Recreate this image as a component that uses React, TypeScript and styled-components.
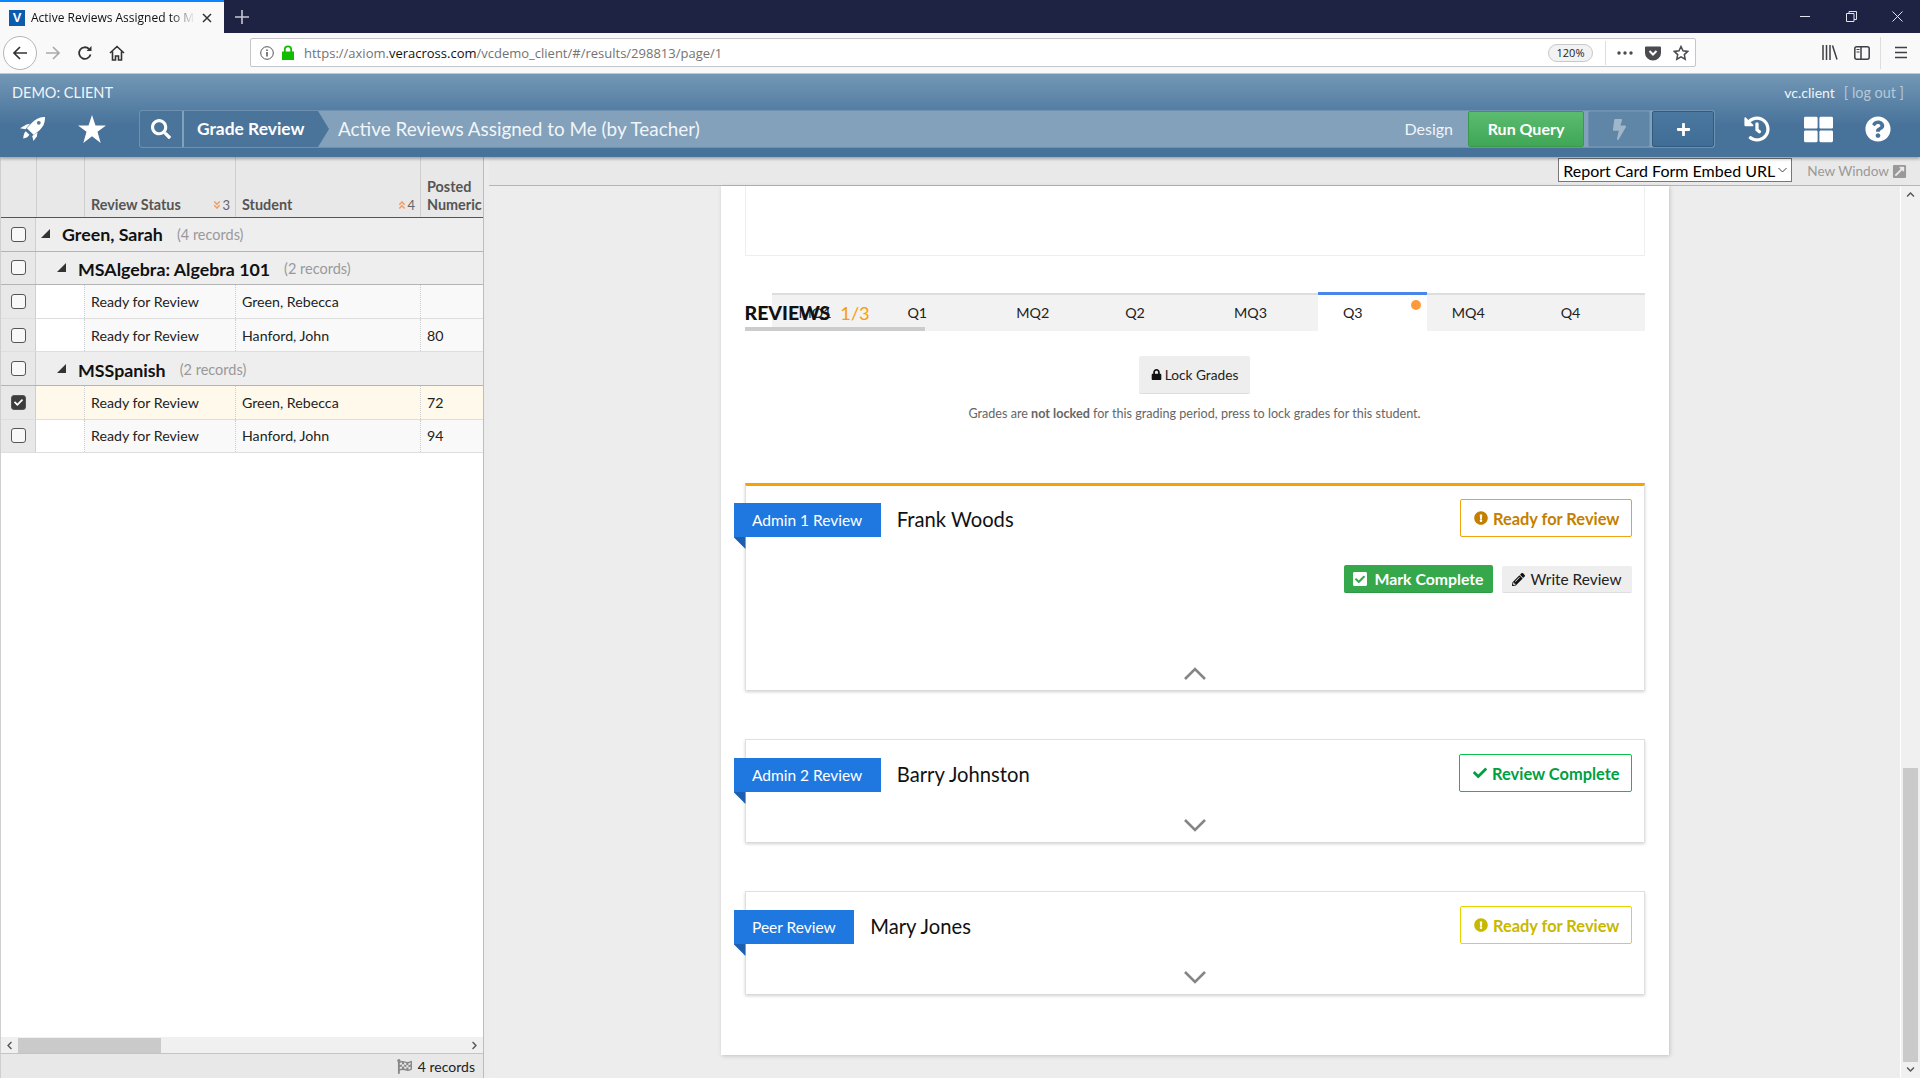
import React from 'react';
import styled, { createGlobalStyle } from 'styled-components';
import {
  FaSearch,
  FaBolt,
  FaPlus,
  FaHistory,
  FaThLarge,
  FaQuestionCircle,
  FaLock,
  FaCheckSquare,
  FaPencilAlt,
  FaExclamationCircle,
  FaCheck,
  FaFlagCheckered,
  FaExternalLinkSquareAlt,
  FaAngleDoubleDown,
  FaAngleDoubleUp,
  FaChevronLeft,
  FaChevronRight,
  FaChevronUp,
  FaChevronDown,
} from 'react-icons/fa';

const Global = createGlobalStyle`
  html, body {
    margin: 0;
    padding: 0;
    height: 1078px;
    overflow: hidden;
    background: #eee;
    font-family: Lato, "Liberation Sans", sans-serif;
  }
  * { box-sizing: border-box; }
`;

const Page = styled.div`
  width: 1920px;
  height: 1078px;
  display: flex;
  flex-direction: column;
  overflow: hidden;
`;

// browser chrome
const TabStrip = styled.div`
  height: 33px;
  background: #1e2344;
  display: flex;
  align-items: stretch;
`;

const Tab = styled.div`
  width: 224px;
  background: #f9f9fa;
  border-top: 2px solid #0a84ff;
  display: flex;
  align-items: center;
  padding-left: 9px;
`;

const Favicon = styled.div`
  width: 16px;
  height: 16px;
  background: #0b5cad;
  color: #fff;
  font: bold 13px/16px "Liberation Sans", sans-serif;
  text-align: center;
`;

const TabTitle = styled.div`
  width: 164px;
  margin-left: 6px;
  font: 12px "Open Sans", sans-serif;
  color: #111;
  white-space: nowrap;
  overflow: hidden;
  mask-image: linear-gradient(to right, #000 85%, transparent);
`;

const TabClose = styled.div`
  margin-left: 6px;
  display: flex;
  color: #333;
`;

const NewTab = styled.div`
  width: 35px;
  display: flex;
  align-items: center;
  justify-content: center;
  color: #c8c9d2;
`;

const WindowButtons = styled.div`
  margin-left: auto;
  display: flex;
  align-items: center;
  color: #e4e5ec;
`;

const WindowButton = styled.div`
  width: 46px;
  height: 33px;
  display: flex;
  align-items: center;
  justify-content: center;
`;

const Toolbar = styled.div`
  height: 41px;
  background: #f9f9fa;
  border-bottom: 1px solid #ccc;
  display: flex;
  align-items: center;
  padding: 0 3px 1px 3px;
`;

const BackButton = styled.div`
  width: 34px;
  height: 34px;
  border: 1px solid #b5b5b8;
  border-radius: 50%;
  background: #fff;
  display: flex;
  align-items: center;
  justify-content: center;
`;

const NavButton = styled.div`
  width: 32px;
  height: 32px;
  display: flex;
  align-items: center;
  justify-content: center;
`;

const AddressBar = styled.div`
  width: 1446px;
  height: 29px;
  margin-left: 117px;
  background: #fff;
  border: 1px solid #c6c6c8;
  border-radius: 2px;
  display: flex;
  align-items: center;
  padding: 0 0 0 9px;
`;

const Url = styled.div`
  margin-left: 9px;
  font: 13px "Open Sans", sans-serif;
  color: #737373;
  & b { font-weight: 400; color: #111; }
`;

const ZoomPill = styled.div`
  margin-left: auto;
  width: 45px;
  height: 18px;
  border: 1px solid #c8c8c8;
  border-radius: 9px;
  background: #f2f2f2;
  font: 11px/16px "Open Sans", sans-serif;
  text-align: center;
  color: #222;
`;

const AddressDivider = styled.div`
  width: 1px;
  height: 24px;
  margin: 0 5px 0 12px;
  background: #ddd;
`;

const AddressIcon = styled.div`
  width: 28px;
  display: flex;
  justify-content: center;
  color: #4a4a4f;
`;

const ToolbarRight = styled.div`
  margin-left: auto;
  display: flex;
  align-items: center;
  color: #3f3f44;
`;

const ToolbarSep = styled.div`
  width: 1px;
  height: 32px;
  margin: 0 4px 0 2px;
  background: #ddd;
`;

// application header
const AppHeader = styled.header`
  height: 83px;
  background: linear-gradient(#7398b6, #48729a 62%, #47729a);
  box-shadow: 0 2px 3px rgba(0, 0, 0, 0.3);
  position: relative;
  z-index: 2;
  color: #f1f5f8;
`;

const HeaderTop = styled.div`
  height: 36px;
  display: flex;
  align-items: center;
  justify-content: space-between;
  padding: 0 16px 0 12px;
  font-size: 14.5px;
`;

const UserLine = styled.div`
  display: flex;
  gap: 9px;
  font-size: 14px;
`;

const Logout = styled.span`
  color: #b5c8d8;
  font-size: 14.4px;
`;

const HeaderBar = styled.div`
  height: 38px;
  display: flex;
  align-items: center;
`;

const QuickLinks = styled.div`
  width: 139px;
  height: 38px;
  padding-left: 20px;
  display: flex;
  align-items: center;
  gap: 33px;
`;

const HeaderIcon = styled.div<{ $w: number }>`
  width: ${(p) => p.$w}px;
  display: flex;
  justify-content: center;
  color: #fff;
`;

const Crumbs = styled.div`
  width: 1576px;
  height: 38px;
  background: #83a1bb;
  border: 1px solid #6d92b1;
  border-radius: 3px;
  display: flex;
  align-items: center;
  overflow: hidden;
`;

const SearchCell = styled.div`
  width: 44px;
  height: 100%;
  background: #4a749a;
  border-right: 2px solid #83a1bb;
  display: flex;
  align-items: center;
  justify-content: center;
  color: #fff;
`;

const CrumbCurrent = styled.div`
  width: 145px;
  height: 100%;
  background: #4a749a;
  clip-path: polygon(0 0, calc(100% - 11px) 0, 100% 50%, calc(100% - 11px) 100%, 0 100%);
  display: flex;
  align-items: center;
  padding: 0 0 2px 13px;
  font-size: 17.4px;
  font-weight: 700;
  color: #fff;
  white-space: nowrap;
`;

const CrumbTitle = styled.div`
  margin-left: 9px;
  padding-bottom: 2px;
  font-size: 18.9px;
  color: #f1f5f8;
`;

const DesignLink = styled.div`
  margin-left: auto;
  margin-right: 15px;
  padding-bottom: 2px;
  font-size: 16px;
  color: #f1f5f8;
`;

const RunQuery = styled.div`
  width: 116px;
  height: 36px;
  padding-bottom: 2px;
  background: linear-gradient(#5cbb6f, #3fa756);
  border: 1px solid #399a4e;
  border-radius: 2px;
  display: flex;
  align-items: center;
  justify-content: center;
  font-size: 16px;
  font-weight: 700;
  color: #fff;
`;

const BarButton = styled.div<{ $on?: boolean }>`
  width: 62px;
  height: 36px;
  margin-left: ${(p) => (p.$on ? 2 : 4)}px;
  background: ${(p) => (p.$on ? 'linear-gradient(#4a789f, #3f6d95)' : '#5f86a6')};
  border: 1px solid ${(p) => (p.$on ? '#2f5b80' : '#6d92b1')};
  border-radius: 2px;
  display: flex;
  align-items: center;
  justify-content: center;
  color: ${(p) => (p.$on ? '#fff' : '#a0b6c9')};
`;

// main area
const Main = styled.div`
  flex: 1;
  display: flex;
  min-height: 0;
`;

const LeftPanel = styled.div`
  width: 484px;
  background: #fff;
  border-left: 1px solid #cfcfcf;
  border-right: 1px solid #bdbdbd;
  display: flex;
  flex-direction: column;
`;

const Grid = styled.div`
  flex: 1;
`;

const HeadRow = styled.div`
  height: 61px;
  display: grid;
  grid-template-columns: 35px 48px 151px 185px 1fr;
  background: #e8e8e8;
  border-bottom: 1px solid #555;
  color: #555;
  font-size: 14.4px;
  font-weight: 700;
`;

const HeadCell = styled.div`
  border-left: 1px solid #cfcfcf;
  padding: 0 5px 3px 6px;
  display: flex;
  align-items: flex-end;
  justify-content: space-between;
  line-height: 18px;
  white-space: nowrap;
  overflow: hidden;
`;

const Sort = styled.span`
  display: inline-flex;
  align-items: center;
  font-size: 13px;
  font-weight: 400;
  color: #666;
  & svg { color: #f59a62; }
`;

const Row = styled.div`
  height: 33.6px;
  display: grid;
  grid-template-columns: 35px 48px 151px 185px 1fr;
  border-bottom: 1px solid #dedede;
`;

const GroupRow = styled.div`
  height: 33.6px;
  display: grid;
  grid-template-columns: 35px 1fr;
  background: #eee;
  border-bottom: 1px solid #b4b4b4;
`;

const CheckCell = styled.div`
  background: #e8e8e8;
  border-right: 1px solid #cfcfcf;
  display: flex;
  align-items: center;
  justify-content: center;
`;

const Checkbox = styled.div<{ $on?: boolean }>`
  width: 15px;
  height: 15px;
  border: 1.5px solid #555;
  border-radius: 3px;
  background: ${(p) => (p.$on ? '#3d3d3d' : '#f8f8f8')};
  color: #fff;
  display: flex;
  align-items: center;
  justify-content: center;
`;

const GroupLabel = styled.div<{ $depth: number }>`
  display: flex;
  align-items: center;
  padding-left: ${(p) => 5 + p.$depth * 16}px;
  padding-top: ${(p) => (p.$depth ? 2 : 0)}px;
`;

const Twist = styled.div`
  width: 0;
  height: 0;
  border-style: solid;
  border-width: 0 0 9px 9px;
  border-color: transparent transparent #333 transparent;
  margin-right: 12px;
  margin-bottom: 2px;
`;

const GroupName = styled.span`
  font-size: 17.8px;
  font-weight: 700;
  color: #111;
`;

const GroupCount = styled.span`
  margin-left: 14px;
  font-size: 14.5px;
  color: #999;
`;

const Cell = styled.div<{ $bg: string; $dotted?: boolean }>`
  background: ${(p) => p.$bg};
  border-left: ${(p) => (p.$dotted ? '1px dotted #ccc' : 'none')};
  padding: 0 6px;
  display: flex;
  align-items: center;
  font-size: 14.2px;
  color: #222;
  white-space: nowrap;
`;

const HScroll = styled.div`
  height: 16px;
  background: #f0f0f0;
  display: flex;
  align-items: center;
  justify-content: space-between;
  color: #555;
`;

const HThumb = styled.div`
  width: 143px;
  height: 15px;
  margin-right: auto;
  background: #cacaca;
`;

const Arrow = styled.div`
  width: 17px;
  display: flex;
  justify-content: center;
`;

const GridFooter = styled.div`
  height: 25px;
  background: #e8e8e8;
  border-top: 1px solid #c4c4c4;
  display: flex;
  align-items: center;
  justify-content: flex-end;
  gap: 6px;
  padding-right: 8px;
  font-size: 14px;
  color: #222;
  & svg { color: #888; }
`;

const Gutter = styled.div`
  width: 5px;
  background: #ececec;
`;

const RightPanel = styled.div`
  flex: 1;
  display: flex;
  flex-direction: column;
  min-width: 0;
`;

const SubBar = styled.div`
  height: 29px;
  background: #e9e9e9;
  border-bottom: 1px solid #b5b5b5;
  display: flex;
  justify-content: flex-end;
  align-items: flex-start;
  padding-right: 13px;
`;

const ReportSelect = styled.div`
  width: 234px;
  height: 24px;
  margin-top: 1px;
  background: #fff;
  border: 1px solid #777;
  display: flex;
  align-items: center;
  justify-content: space-between;
  padding: 0 4px;
  font-size: 16px;
  color: #000;
  white-space: nowrap;
  & svg { flex-shrink: 0; }
`;

const NewWindow = styled.div`
  margin-left: 15px;
  height: 28px;
  display: flex;
  align-items: center;
  gap: 3px;
  font-size: 13.6px;
  color: #999;
`;

const Stage = styled.div`
  flex: 1;
  display: flex;
  min-height: 0;
`;

const StageScroll = styled.div`
  flex: 1;
  background: #ededed;
  display: flex;
  justify-content: center;
  min-height: 0;
`;

const Sheet = styled.div`
  width: 948px;
  height: 869px;
  background: #fff;
  box-shadow: 1px 1px 4px rgba(0, 0, 0, 0.18);
  padding: 0 24px;
`;

const TopBox = styled.div`
  height: 70px;
  border: 1px solid #eee;
  border-top: none;
`;

const TabsWrap = styled.div`
  position: relative;
  margin-top: 37px;
  height: 38px;
  padding-left: 27px;
`;

const SectionTitle = styled.div`
  position: absolute;
  left: 0;
  top: 0;
  width: 180px;
  height: 38px;
  border-bottom: 4px solid #ccc;
  display: flex;
  align-items: center;
  padding-top: 5px;
  font-size: 19.5px;
  font-weight: 900;
  color: #111;
  z-index: 1;
  & span {
    margin-left: 10px;
    font-weight: 400;
    color: #f59e0b;
    font-size: 18.2px;
  }
`;

const TabBar = styled.div`
  height: 38px;
  background: #f2f2f2;
  border-top: 2px solid #ddd;
  display: flex;
  padding-left: 2px;
`;

const QuarterTab = styled.div<{ $active?: boolean }>`
  position: relative;
  width: 109px;
  height: ${(p) => (p.$active ? 39 : 36)}px;
  margin-top: ${(p) => (p.$active ? -3 : 0)}px;
  background: ${(p) => (p.$active ? '#fff' : 'transparent')};
  border-top: ${(p) => (p.$active ? '3px solid #4a86e8' : 'none')};
  padding: 0 0 2px 25px;
  display: flex;
  align-items: center;
  font-size: 14.3px;
  color: #222;
`;

const TabDot = styled.div`
  position: absolute;
  top: 5px;
  right: 6px;
  width: 10px;
  height: 10px;
  border-radius: 50%;
  background: #ff9a3c;
`;

const LockWrap = styled.div`
  margin-top: 25px;
  display: flex;
  justify-content: center;
`;

const LockButton = styled.div`
  width: 111px;
  height: 38px;
  background: #eee;
  border-bottom: 1px solid #ddd;
  border-radius: 2px;
  display: flex;
  align-items: center;
  justify-content: center;
  gap: 3px;
  font-size: 13.7px;
  color: #222;
`;

const LockNote = styled.div`
  margin-top: 10px;
  height: 20px;
  text-align: center;
  font-size: 12.6px;
  line-height: 20px;
  color: #666;
`;

const ReviewCard = styled.div<{ $accent?: boolean; $gap: number }>`
  margin-top: ${(p) => p.$gap}px;
  background: #fff;
  border: 1px solid #e0e0e0;
  border-top: ${(p) => (p.$accent ? '3px solid #f5a300' : '1px solid #e0e0e0')};
  border-bottom: none;
  box-shadow: 0 2px 3px rgba(0, 0, 0, 0.18);
  padding: ${(p) => (p.$accent ? 13 : 14)}px 12px 10px 0;
`;

const CardHead = styled.div`
  display: flex;
  align-items: flex-end;
`;

const Ribbon = styled.div`
  position: relative;
  margin-left: -12px;
  height: 34px;
  padding: 0 18.5px;
  background: #1f78e0;
  color: #fff;
  font-size: 15.5px;
  line-height: 34px;
  white-space: nowrap;
  &::after {
    content: '';
    position: absolute;
    left: 0;
    top: 100%;
    width: 12px;
    height: 12px;
    background: #1b5fae;
    clip-path: polygon(0 0, 100% 0, 100% 100%);
  }
`;

const ReviewerName = styled.div`
  margin-left: 16px;
  height: 34px;
  font-size: 20.2px;
  line-height: 32px;
  color: #111;
`;

const Status = styled.div<{ $border: string; $color: string }>`
  margin-left: auto;
  height: 38px;
  padding: 0 11px 0 13px;
  border: 1px solid ${(p) => p.$border};
  border-radius: 2px;
  display: flex;
  align-items: center;
  gap: 5px;
  font-size: 16.4px;
  font-weight: 700;
  color: ${(p) => p.$color};
`;

const CardActions = styled.div`
  margin-top: 28px;
  display: flex;
  justify-content: flex-end;
  gap: 9px;
`;

const CompleteButton = styled.div`
  height: 28px;
  width: 149px;
  background: #34a84a;
  border-bottom: 1px solid #2c9a42;
  border-radius: 2px;
  color: #fff;
  display: flex;
  align-items: center;
  justify-content: center;
  gap: 6px;
  font-size: 15.8px;
  font-weight: 700;
  white-space: nowrap;
`;

const WriteButton = styled.div`
  height: 27px;
  width: 130px;
  margin-top: 1px;
  background: #eee;
  border-bottom: 1px solid #ddd;
  border-radius: 2px;
  color: #222;
  display: flex;
  align-items: center;
  justify-content: center;
  gap: 6px;
  font-size: 15.4px;
  white-space: nowrap;
`;

const CardToggle = styled.div<{ $gap: number }>`
  margin-top: ${(p) => p.$gap}px;
  padding-left: 12px;
  height: 13px;
  display: flex;
  justify-content: center;
`;

const VScroll = styled.div`
  width: 20px;
  background: #f0f0f0;
  border-left: 1px solid #fff;
  display: flex;
  flex-direction: column;
  align-items: center;
  padding: 4px 0;
  color: #555;
`;

const VThumb = styled.div`
  width: 15px;
  height: 294px;
  margin-top: auto;
  margin-bottom: 3px;
  background: #cacaca;
`;

const RocketIcon = () => (
  <svg width="25" height="24" viewBox="0 0 25 24" fill="#fff">
    <path d="M25 0c.3 5.500-1.700 9.800-5.500 13.200l-5.700 4.900-7-6.800 5.100-5.600C15.500 2 19.800-.2 25 0z" />
    <path d="M6.500 7.500L10 6.800 5.500 12.300 0 11.300z" />
    <path d="M17.500 15.500l-.6 3.800L13.500 24l-1.300-5z" />
    <path d="M5.800 14.200l3.600 3.600c-1 2-3 3.200-6.200 3.600.2-3.200 1-5.600 2.600-7.200z" />
    <circle cx="18.800" cy="5.800" r="1.900" fill="#55799c" />
  </svg>
);

const StarIcon = () => (
  <svg width="28" height="28" viewBox="0 0 28 28" fill="#fff">
    <path d="M14 0l3.500 10.400H28l-8.500 6.400L22.700 28 14 21.200 5.300 28l3.200-11.200L0 10.400h10.500z" />
  </svg>
);

const Chevron = ({ up }: { up?: boolean }) => (
  <svg width="22" height="13" viewBox="0 0 22 13" fill="none" stroke="#858585" strokeWidth="2.600">
    <path d={up ? 'M1 12L11 2l10 10' : 'M1 1l10 10L21 1'} />
  </svg>
);

type Item = { status: string; student: string; score?: string; selected?: boolean };

const RowView = ({ status, student, score, selected }: Item) => {
  const bg = selected ? '#fff9ec' : '#f9f9f9';
  return (
    <Row>
      <CheckCell>
        <Checkbox $on={selected}>{selected && <FaCheck size={9} />}</Checkbox>
      </CheckCell>
      <Cell $bg={selected ? '#fff9ec' : '#fff'} />
      <Cell $bg={bg} $dotted>{status}</Cell>
      <Cell $bg={bg} $dotted>{student}</Cell>
      <Cell $bg={bg} $dotted>{score}</Cell>
    </Row>
  );
};

const Group = ({ depth, name, count }: { depth: number; name: string; count: string }) => (
  <GroupRow>
    <CheckCell>
      <Checkbox />
    </CheckCell>
    <GroupLabel $depth={depth}>
      <Twist />
      <GroupName>{name}</GroupName>
      <GroupCount>{count}</GroupCount>
    </GroupLabel>
  </GroupRow>
);

const quarters = ['MQ1', 'Q1', 'MQ2', 'Q2', 'MQ3', 'Q3', 'MQ4', 'Q4'];

export default function App() {
  return (
    <Page>
      <Global />
      <TabStrip>
        <Tab>
          <Favicon>V</Favicon>
          <TabTitle>Active Reviews Assigned to Me (by Teacher)</TabTitle>
          <TabClose>
            <svg width="12" height="12" viewBox="0 0 12 12" stroke="currentColor" strokeWidth="1.5">
              <path d="M2 2l8 8M10 2l-8 8" />
            </svg>
          </TabClose>
        </Tab>
        <NewTab>
          <svg width="14" height="14" viewBox="0 0 14 14" stroke="currentColor" strokeWidth="1.6">
            <path d="M7 0v14M0 7h14" />
          </svg>
        </NewTab>
        <WindowButtons>
          <WindowButton>
            <svg width="11" height="11" viewBox="0 0 11 11" stroke="currentColor">
              <path d="M0 5.5h10" />
            </svg>
          </WindowButton>
          <WindowButton>
            <svg width="11" height="11" viewBox="0 0 11 11" fill="none" stroke="currentColor">
              <path d="M.5 2.5h7.500v8h-7.500zM3 2.500v-2h7.500v8h-2.500" />
            </svg>
          </WindowButton>
          <WindowButton>
            <svg width="11" height="11" viewBox="0 0 11 11" stroke="currentColor">
              <path d="M.5.5l10 10M10.500.5l-10 10" />
            </svg>
          </WindowButton>
        </WindowButtons>
      </TabStrip>

      <Toolbar>
        <BackButton>
          <svg width="16" height="16" viewBox="0 0 16 16" fill="none" stroke="#333" strokeWidth="1.7">
            <path d="M15 8H2M8 2L2 8l6 6" />
          </svg>
        </BackButton>
        <NavButton>
          <svg width="16" height="16" viewBox="0 0 16 16" fill="none" stroke="#aaa" strokeWidth="1.7">
            <path d="M1 8h13M8 2l6 6-6 6" />
          </svg>
        </NavButton>
        <NavButton>
          <svg width="16" height="16" viewBox="0 0 16 16" fill="none" stroke="#333" strokeWidth="1.8">
            <path d="M13.500 9.500A5.800 5.800 0 1 1 12 4" />
            <path d="M14.500 1v5h-5z" fill="#333" stroke="none" />
          </svg>
        </NavButton>
        <NavButton>
          <svg width="16" height="16" viewBox="0 0 16 16" fill="none" stroke="#333" strokeWidth="1.6">
            <path d="M1 8l7-6.500L15 8M3.500 6.500V15h3v-4h3v4h3V6.500" />
          </svg>
        </NavButton>
        <AddressBar>
          <svg width="14" height="14" viewBox="0 0 14 14" fill="none" stroke="#555">
            <circle cx="7" cy="7" r="6.300" />
            <path d="M7 6v4.500M7 3.500v1.500" strokeWidth="1.500" />
          </svg>
          <svg width="14" height="15" viewBox="0 0 14 15" style={{ marginLeft: 7 }}>
            <path d="M1 6.500h12V15H1z" fill="#12bc00" />
            <path d="M3.800 7V4.500a3.200 3.200 0 0 1 6.400 0V7" fill="none" stroke="#12bc00" strokeWidth="1.800" />
          </svg>
          <Url>
            https://axiom.<b>veracross.com</b>/vcdemo_client/#/results/298813/page/1
          </Url>
          <ZoomPill>120%</ZoomPill>
          <AddressDivider />
          <AddressIcon>
            <svg width="16" height="4" viewBox="0 0 16 4" fill="currentColor">
              <circle cx="2" cy="2" r="1.700" />
              <circle cx="8" cy="2" r="1.700" />
              <circle cx="14" cy="2" r="1.700" />
            </svg>
          </AddressIcon>
          <AddressIcon>
            <svg width="16" height="16" viewBox="0 0 16 16">
              <path d="M1 1.500h14a1 1 0 0 1 1 1V8a8 7.500 0 0 1-16 0V2.500a1 1 0 0 1 1-1z" fill="#4a4a4f" />
              <path d="M4.500 6L8 9.500 11.500 6" fill="none" stroke="#fff" strokeWidth="2" />
            </svg>
          </AddressIcon>
          <AddressIcon>
            <svg width="16" height="16" viewBox="0 0 16 16" fill="none" stroke="currentColor" strokeWidth="1.500">
              <path d="M8 1.500l2 4.300 4.700.6-3.400 3.200.9 4.600L8 11.900l-4.200 2.300.9-4.600L1.300 6.400 6 5.800z" />
            </svg>
          </AddressIcon>
        </AddressBar>
        <ToolbarRight>
          <NavButton>
            <svg width="16" height="15" viewBox="0 0 16 15" fill="none" stroke="currentColor" strokeWidth="1.500">
              <path d="M1 0v15M4.500 0v15M8 0v15M10.500.5l4.500 14" />
            </svg>
          </NavButton>
          <NavButton>
            <svg width="16" height="14" viewBox="0 0 16 14" fill="none" stroke="currentColor" strokeWidth="1.500">
              <rect x=".8" y=".8" width="14.400" height="12.400" rx="2" />
              <path d="M7 .8v12.400" />
              <path d="M2.500 3.500h3M2.500 6h3" strokeWidth="1" />
            </svg>
          </NavButton>
          <ToolbarSep />
          <NavButton>
            <svg width="14" height="13" viewBox="0 0 14 13" stroke="currentColor" strokeWidth="1.700">
              <path d="M1 1.500h12M1 6.500h12M1 11.500h12" />
            </svg>
          </NavButton>
        </ToolbarRight>
      </Toolbar>

      <AppHeader>
        <HeaderTop>
          <span>DEMO: CLIENT</span>
          <UserLine>
            <span>vc.client</span>
            <Logout>[ log out ]</Logout>
          </UserLine>
        </HeaderTop>
        <HeaderBar>
          <QuickLinks>
            <RocketIcon />
            <StarIcon />
          </QuickLinks>
          <Crumbs>
            <SearchCell>
              <FaSearch size={20} />
            </SearchCell>
            <CrumbCurrent>Grade Review</CrumbCurrent>
            <CrumbTitle>Active Reviews Assigned to Me (by Teacher)</CrumbTitle>
            <DesignLink>Design</DesignLink>
            <RunQuery>Run Query</RunQuery>
            <BarButton>
              <FaBolt size={21} />
            </BarButton>
            <BarButton $on>
              <FaPlus size={15} />
            </BarButton>
          </Crumbs>
          <HeaderIcon $w={84}>
            <FaHistory size={26} />
          </HeaderIcon>
          <HeaderIcon $w={38}>
            <FaThLarge size={29} />
          </HeaderIcon>
          <HeaderIcon $w={82}>
            <FaQuestionCircle size={26} />
          </HeaderIcon>
        </HeaderBar>
      </AppHeader>

      <Main>
        <LeftPanel>
          <Grid>
            <HeadRow>
              <div />
              <HeadCell />
              <HeadCell>
                Review Status
                <Sort>
                  <FaAngleDoubleDown size={10} />3
                </Sort>
              </HeadCell>
              <HeadCell>
                Student
                <Sort>
                  <FaAngleDoubleUp size={10} />4
                </Sort>
              </HeadCell>
              <HeadCell>
                Posted
                <br />
                Numeric
              </HeadCell>
            </HeadRow>
            <Group depth={0} name="Green, Sarah" count="(4 records)" />
            <Group depth={1} name="MSAlgebra: Algebra 101" count="(2 records)" />
            <RowView status="Ready for Review" student="Green, Rebecca" />
            <RowView status="Ready for Review" student="Hanford, John" score="80" />
            <Group depth={1} name="MSSpanish" count="(2 records)" />
            <RowView status="Ready for Review" student="Green, Rebecca" score="72" selected />
            <RowView status="Ready for Review" student="Hanford, John" score="94" />
          </Grid>
          <HScroll>
            <Arrow>
              <FaChevronLeft size={9} />
            </Arrow>
            <HThumb />
            <Arrow>
              <FaChevronRight size={9} />
            </Arrow>
          </HScroll>
          <GridFooter>
            <FaFlagCheckered size={15} />
            4 records
          </GridFooter>
        </LeftPanel>
        <Gutter />
        <RightPanel>
          <SubBar>
            <ReportSelect>
              Report Card Form Embed URL
              <svg width="9" height="6" viewBox="0 0 9 6" fill="none" stroke="#444">
                <path d="M.5 1l4 4 4-4" />
              </svg>
            </ReportSelect>
            <NewWindow>
              New Window
              <FaExternalLinkSquareAlt size={15} />
            </NewWindow>
          </SubBar>
          <Stage>
            <StageScroll>
              <Sheet>
                <TopBox />
                <TabsWrap>
                  <SectionTitle>
                    REVIEWS<span>1/3</span>
                  </SectionTitle>
                  <TabBar>
                    {quarters.map((q) => (
                      <QuarterTab key={q} $active={q === 'Q3'}>
                        {q}
                        {q === 'Q3' && <TabDot />}
                      </QuarterTab>
                    ))}
                  </TabBar>
                </TabsWrap>
                <LockWrap>
                  <LockButton>
                    <FaLock size={11} color="#111" />
                    Lock Grades
                  </LockButton>
                </LockWrap>
                <LockNote>
                  Grades are <b>not locked</b> for this grading period, press to lock grades for this student.
                </LockNote>

                <ReviewCard $accent $gap={59}>
                  <CardHead>
                    <Ribbon>Admin 1 Review</Ribbon>
                    <ReviewerName>Frank Woods</ReviewerName>
                    <Status $border="#f0a30a" $color="#c47f00">
                      <FaExclamationCircle size={14} />
                      Ready for Review
                    </Status>
                  </CardHead>
                  <CardActions>
                    <CompleteButton>
                      <FaCheckSquare size={16} />
                      Mark Complete
                    </CompleteButton>
                    <WriteButton>
                      <FaPencilAlt size={13} color="#111" />
                      Write Review
                    </WriteButton>
                  </CardActions>
                  <CardToggle $gap={74}>
                    <Chevron up />
                  </CardToggle>
                </ReviewCard>

                <ReviewCard $gap={49}>
                  <CardHead>
                    <Ribbon>Admin 2 Review</Ribbon>
                    <ReviewerName>Barry Johnston</ReviewerName>
                    <Status $border="#0cc14b" $color="#00a040">
                      <FaCheck size={14} />
                      Review Complete
                    </Status>
                  </CardHead>
                  <CardToggle $gap={27}>
                    <Chevron />
                  </CardToggle>
                </ReviewCard>

                <ReviewCard $gap={49}>
                  <CardHead>
                    <Ribbon>Peer Review</Ribbon>
                    <ReviewerName>Mary Jones</ReviewerName>
                    <Status $border="#e8d500" $color="#c9b800">
                      <FaExclamationCircle size={14} />
                      Ready for Review
                    </Status>
                  </CardHead>
                  <CardToggle $gap={27}>
                    <Chevron />
                  </CardToggle>
                </ReviewCard>
              </Sheet>
            </StageScroll>
            <VScroll>
              <FaChevronUp size={9} />
              <VThumb />
              <FaChevronDown size={9} />
            </VScroll>
          </Stage>
        </RightPanel>
      </Main>
    </Page>
  );
}
